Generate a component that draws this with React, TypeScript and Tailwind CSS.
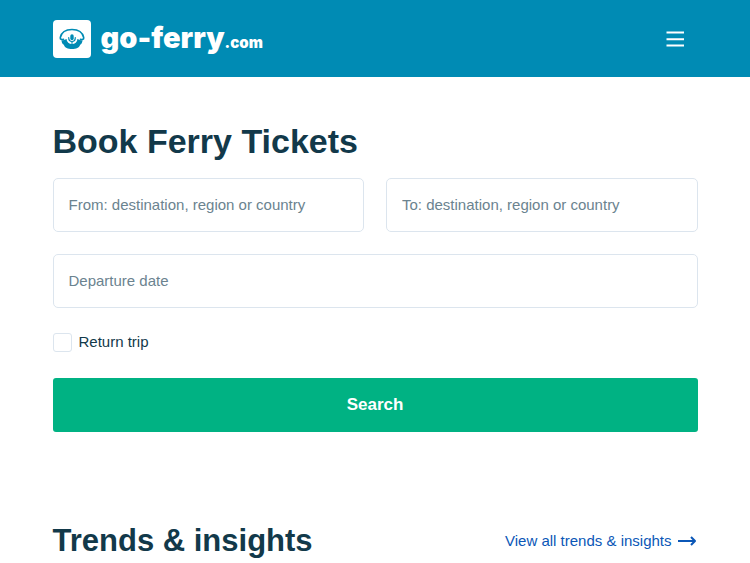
import React, { useState } from 'react';

const BrandIcon: React.FC = () => (
  <svg viewBox="0 0 38 38" className="h-[38px] w-[38px]" aria-hidden="true">
    <rect width="38" height="38" rx="4" fill="#fff" />
    <path
      d="M10.500 19.300C8.500 19.800 7 19.500 7.300 17.500 8.500 12 13 9.500 19 9.500s10.500 2.500 11.700 8c.3 2-1.200 2.300-3.200 1.800"
      fill="none"
      stroke="#008bb4"
      strokeWidth="1.600"
      strokeLinecap="round"
    />
    <path d="M8.500 20.300c1.800 0 3.500-.6 5-1.300h11c1.500.7 3.200 1.300 5 1.300-.2 2.300-.7 3.600-2.300 4.400-1 3.100-4 4.300-8.200 4.300s-7.200-1.200-8.200-4.300c-1.600-.8-2.100-2.100-2.300-4.400z" fill="#008bb4" />
    <circle cx="19" cy="18.500" r="5.500" fill="#fff" />
    <rect x="17.300" y="14.300" width="3.400" height="6" rx="1.700" fill="#008bb4" />
    <path d="M15.700 17.500c0 2.700 1.300 4 3.300 4s3.300-1.300 3.300-4M19 21.500v1.800" fill="none" stroke="#008bb4" strokeWidth="1.200" strokeLinecap="round" />
  </svg>
);

const inputClass =
  'block h-[54px] w-full rounded-[5px] border border-[#dce5ee] bg-white px-[15px] pb-px text-[15px] text-[#12394a] outline-none placeholder:text-[#6b838f] placeholder:opacity-100 focus:border-[#008bb4]';

const Header: React.FC = () => (
  <header className="flex h-[77px] items-center justify-between bg-[#008bb4] px-[7%] text-white">
    <a href="/" className="flex items-center gap-[10px]">
      <BrandIcon />
      <span className="flex items-baseline pt-1 font-['Inter',sans-serif] font-black">
        <span className="text-[29px] leading-[38px]">go-ferry</span>
        <span className="text-[15px] leading-[38px]">.com</span>
      </span>
    </a>
    <button type="button" aria-label="Menu" className="mr-3 flex h-6 w-5 items-center justify-center">
      <svg viewBox="0 0 20 24" className="h-6 w-5" stroke="currentColor" strokeWidth="2" aria-hidden="true">
        <path d="M0.500 5.500h17.500M0.500 12.300h17.500M0.500 18.500h17.500" />
      </svg>
    </button>
  </header>
);

const SearchForm: React.FC = () => {
  const [form, setForm] = useState({ from: '', to: '', date: '' });
  const [returnTrip, setReturnTrip] = useState(false);

  const handleChange = (e: React.ChangeEvent<HTMLInputElement>) => {
    const { name, value } = e.target;
    setForm(prev => ({ ...prev, [name]: value }));
  };

  return (
    <form onSubmit={e => e.preventDefault()}>
      <div className="grid grid-cols-2 gap-x-[22px] gap-y-[22px]">
        <input name="from" aria-label="From" value={form.from} onChange={handleChange} placeholder="From: destination, region or country" className={inputClass} />
        <input name="to" aria-label="To" value={form.to} onChange={handleChange} placeholder="To: destination, region or country" className={inputClass} />
        <div className="col-span-2">
          <input name="date" aria-label="Departure date" value={form.date} onChange={handleChange} placeholder="Departure date" className={inputClass} />
        </div>
      </div>
      <label className="mt-[22px] flex w-fit items-center gap-[7px] text-[15px] leading-6 text-[#12394a]">
        <input
          type="checkbox"
          checked={returnTrip}
          onChange={e => setReturnTrip(e.target.checked)}
          className="h-[19px] w-[19px] appearance-none rounded-[3px] border border-[#dce5ee] bg-white checked:bg-[#00b283]"
        />
        Return trip
      </label>
      <button type="submit" className="mt-6 h-[54px] w-full rounded-[3px] bg-[#00b283] pb-px text-[17px] font-bold text-white">
        Search
      </button>
    </form>
  );
};

export default function App() {
  return (
    <div className="bg-white font-['Liberation_Sans',Arial,sans-serif]">
      <Header />
      <main className="px-[7%]">
        <section className="pt-11">
          <h1 className="mb-4 text-[34px] leading-[41px] font-bold text-[#12394a]">Book Ferry Tickets</h1>
          <SearchForm />
        </section>
        <section className="flex items-center justify-between pt-[90px]">
          <h2 className="text-[31px] leading-[38px] font-bold text-[#12394a]">Trends &amp; insights</h2>
          <a href="/trends" className="flex items-center gap-[6px] text-[15px] text-[#0b57b7]">
            View all trends &amp; insights
            <svg viewBox="0 0 20 12" className="h-3 w-5" fill="none" stroke="currentColor" strokeWidth="2" strokeLinejoin="round" aria-hidden="true">
              <path d="M0 6h17M13 2l4 4-4 4" />
            </svg>
          </a>
        </section>
      </main>
    </div>
  );
}
